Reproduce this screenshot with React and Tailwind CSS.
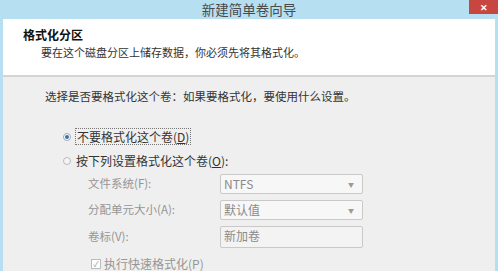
import React from 'react';

const font = { fontFamily: '"Noto Sans CJK SC", "Noto Sans", sans-serif' };

const Select = ({ value }) => (
  <div className="flex h-[20px] w-[143px] items-center justify-between rounded-[2px] border border-[#c9c9c9] bg-[#f7f7f7] pl-[3px] pr-[8px] text-[12px] text-[#8a8a8a]">
    <span>{value}</span>
    <span className="text-[6px] text-[#9a9a9a]">▼</span>
  </div>
);

export default function App() {
  return (
    <div className="flex h-[271px] w-[498px] flex-col overflow-hidden bg-[#b6e0f2] text-[#222]" style={font}>
      <div className="flex h-[19px] shrink-0 items-start">
        <div className="w-[29px] shrink-0" />
        <div className="flex h-[19px] flex-1 items-center justify-center text-[13.5px] leading-none text-[#4a4a4a]">新建简单卷向导</div>
        <div className="flex h-[14px] w-[29px] shrink-0 items-center justify-center bg-[#c7463f] text-[9px] font-bold leading-none text-white">
          ✕
        </div>
      </div>
      <div className="mx-[3px] flex flex-1 flex-col">
        <div className="h-[58px] border-b-2 border-[#d4d4d4] bg-white pl-[20px] pt-[8px]">
          <div className="text-[12px] font-bold leading-[16px] text-[#111]">格式化分区</div>
          <div className="pl-[18px] text-[11px] leading-[18px] text-[#333]">要在这个磁盘分区上储存数据，你必须先将其格式化。</div>
        </div>
        <div className="flex-1 bg-[#efefef] pl-[42px] pt-[10px]">
          <div className="text-[11.5px] leading-[18px] text-[#333]">选择是否要格式化这个卷：如果要格式化，要使用什么设置。</div>
          <div className="mt-[23px] flex items-center gap-[4px] pl-[18px]">
            <span className="flex h-[8px] w-[8px] items-center justify-center rounded-full border border-[#9ab] bg-white">
              <span className="h-[4px] w-[4px] rounded-full bg-[#3d6fa5]" />
            </span>
            <span className="border border-dotted border-[#777] px-[1px] text-[12px] leading-[15px] text-[#333]">
              不要格式化这个卷(<span className="underline">D</span>)
            </span>
          </div>
          <div className="mt-[8px] flex items-center gap-[5px] pl-[18px]">
            <span className="h-[8px] w-[8px] rounded-full border border-[#bbb] bg-[#f4f4f4]" />
            <span className="text-[12px] leading-[15px] text-[#333]">
              按下列设置格式化这个卷(<span className="underline">O</span>):
            </span>
          </div>
          <div className="mt-[6px] grid grid-cols-[132px_143px] items-center gap-y-[6px] pl-[43px] text-[11.5px] text-[#959595]">
            <span>文件系统(F):</span>
            <Select value="NTFS" />
            <span>分配单元大小(A):</span>
            <Select value="默认值" />
            <span className="self-center">卷标(V):</span>
            <div className="h-[22px] w-[143px] rounded-[2px] border border-[#c9c9c9] bg-[#f3f3f3] pl-[3px] text-[12px] leading-[18px] text-[#8a8a8a]">新加卷</div>
          </div>
          <div className="mt-[9px] flex items-center gap-[3px] pl-[46px] text-[12px] leading-[14px] text-[#959595]">
            <span className="flex h-[10px] w-[10px] items-center justify-center border border-[#bbb] bg-white text-[8px] leading-none text-[#999]">✓</span>
            <span>执行快速格式化(P)</span>
          </div>
        </div>
      </div>
    </div>
  );
}
